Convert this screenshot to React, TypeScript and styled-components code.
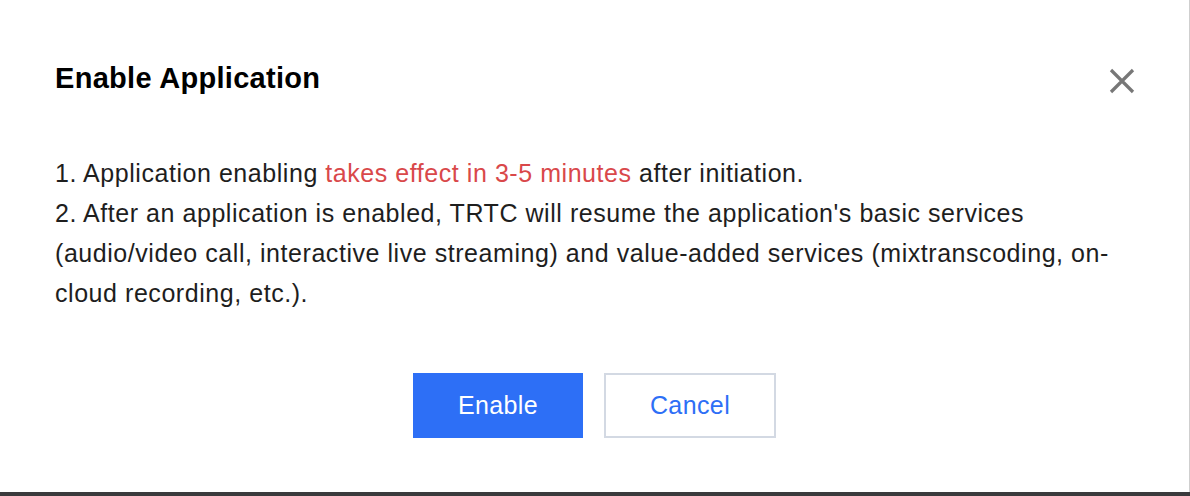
import React from 'react';
import styled, { createGlobalStyle } from 'styled-components';

const GlobalStyle = createGlobalStyle`
  html, body {
    margin: 0;
    padding: 0;
    background: #3a3a3c;
  }
  body {
    font-family: "Liberation Sans", Arial, Helvetica, sans-serif;
  }
`;

const Page = styled.div`
  width: 1190px;
  height: 496px;
  background: #3a3a3c;
  overflow: hidden;
`;

const Dialog = styled.div`
  box-sizing: border-box;
  width: 1190px;
  height: 492px;
  background: #ffffff;
  border-right: 1px solid #cfcfcf;
  padding: 58px 54px 0 55px;
  display: flex;
  flex-direction: column;
`;

const Header = styled.div`
  display: flex;
  align-items: center;
  justify-content: space-between;
  height: 40px;
`;

const Title = styled.h2`
  margin: 0;
  font-size: 29px;
  line-height: 40px;
  font-weight: 700;
  letter-spacing: 0.3px;
  color: #000000;
`;

const CloseButton = styled.button`
  width: 26px;
  height: 26px;
  margin-top: 6px;
  padding: 0;
  border: none;
  background: transparent;
  cursor: pointer;
  display: flex;
  align-items: center;
  justify-content: center;
`;

const Body = styled.div`
  margin-top: 55px;
  font-size: 25px;
  line-height: 40px;
  letter-spacing: 0.55px;
  color: #1e1e1e;
`;

const Line = styled.p`
  margin: 0;
`;

const Highlight = styled.span`
  color: #d9484a;
`;

const Footer = styled.div`
  margin-top: 60px;
  display: flex;
  justify-content: center;
  gap: 21px;
  padding-right: 1px;
`;

const Button = styled.button<{ $primary?: boolean }>`
  box-sizing: border-box;
  width: ${p => (p.$primary ? '170px' : '172px')};
  height: 65px;
  font-family: "Liberation Sans", Arial, Helvetica, sans-serif;
  font-size: 25px;
  letter-spacing: 0.4px;
  cursor: pointer;
  background: ${p => (p.$primary ? '#2d6ff6' : '#ffffff')};
  color: ${p => (p.$primary ? '#ffffff' : '#2d6ff6')};
  border: ${p => (p.$primary ? 'none' : '2px solid #d3d9e3')};
`;

const CloseIcon = () => (
  <svg width="26" height="26" viewBox="0 0 26 26">
    <path d="M2 2 L24 24 M24 2 L2 24" stroke="#777777" strokeWidth="3.2" fill="none" />
  </svg>
);

export default function App() {
  return (
    <Page>
      <GlobalStyle />
      <Dialog>
        <Header>
          <Title>Enable Application</Title>
          <CloseButton aria-label="Close">
            <CloseIcon />
          </CloseButton>
        </Header>
        <Body>
          <Line>
            1. Application enabling <Highlight>takes effect in 3-5 minutes</Highlight> after initiation.
          </Line>
          <Line>
            2. After an application is enabled, TRTC will resume the application's basic services
            (audio/video call, interactive live streaming) and value-added services (mixtranscoding,
            on-cloud recording, etc.).
          </Line>
        </Body>
        <Footer>
          <Button $primary>Enable</Button>
          <Button>Cancel</Button>
        </Footer>
      </Dialog>
    </Page>
  );
}
